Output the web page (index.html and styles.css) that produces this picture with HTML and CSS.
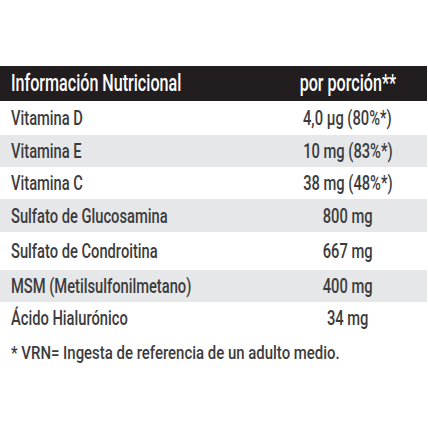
FILE: index.html
```html
<!DOCTYPE html>
<html lang="es">
<head>
    <meta charset="UTF-8">
    <meta name="viewport" content="width=device-width, initial-scale=1.0">
    <title>Información Nutricional</title>
    <link rel="stylesheet" href="styles.css">
</head>
<body>
    <!-- Tabla nutricional -->
    <table class="nutri-table">
        <thead>
            <tr class="row-head">
                <th class="col-name"><span class="txt">Información Nutricional</span></th>
                <th class="col-value"><span class="txt">por porción**</span></th>
            </tr>
        </thead>
        <tbody>
            <tr class="row-d">
                <td class="col-name"><span class="txt">Vitamina D</span></td>
                <td class="col-value"><span class="txt">4,0 µg (80%*)</span></td>
            </tr>
            <tr class="row-alt">
                <td class="col-name"><span class="txt">Vitamina E</span></td>
                <td class="col-value"><span class="txt">10 mg (83%*)</span></td>
            </tr>
            <tr>
                <td class="col-name"><span class="txt">Vitamina C</span></td>
                <td class="col-value"><span class="txt">38 mg (48%*)</span></td>
            </tr>
            <tr class="row-alt">
                <td class="col-name"><span class="txt">Sulfato de Glucosamina</span></td>
                <td class="col-value"><span class="txt">800 mg</span></td>
            </tr>
            <tr class="row-tall">
                <td class="col-name"><span class="txt">Sulfato de Condroitina</span></td>
                <td class="col-value"><span class="txt">667 mg</span></td>
            </tr>
            <tr class="row-alt">
                <td class="col-name"><span class="txt">MSM (Metilsulfonilmetano)</span></td>
                <td class="col-value"><span class="txt">400 mg</span></td>
            </tr>
            <tr>
                <td class="col-name"><span class="txt">Ácido Hialurónico</span></td>
                <td class="col-value"><span class="txt">34 mg</span></td>
            </tr>
        </tbody>
    </table>

    <p class="footnote"><span class="txt">* VRN= Ingesta de referencia de un adulto medio.</span></p>
</body>
</html>
```

FILE: styles.css
```css
:root {
    --head-bg: #221e1f;
    --alt-bg: #e6e7e8;
    --text-color: #3c3c3e;
}

body {
    font-family: Roboto, 'Liberation Sans', sans-serif;
    margin: 0;
    padding: 0;
    background-color: white;
    color: var(--text-color);
}

.nutri-table {
    width: 427px;
    margin-top: 66px;
    border-collapse: collapse;
    font-size: 21px;
    font-weight: 500;
}

.nutri-table th,
.nutri-table td {
    padding: 0;
    height: 32px;
    white-space: nowrap;
    vertical-align: middle;
}

/* condensed look: the page uses a narrow face */
.txt {
    display: inline-block;
    transform: scaleX(0.7);
    transform-origin: left center;
    white-space: nowrap;
}

.col-name {
    text-align: left;
    padding-left: 11px !important;
}

.col-value {
    width: 160px;
    text-align: center;
}

.col-value .txt {
    transform-origin: center center;
}

.row-head {
    background-color: var(--head-bg);
    color: white;
}

.row-head th {
    height: 35px;
    font-size: 23px;
    font-weight: 500;
}

.row-d td {
    height: 34px;
}

.row-alt {
    background-color: var(--alt-bg);
}

.row-alt td {
    height: 32px;
}

.nutri-table tr:nth-child(4) td {
    height: 33px;
}

.row-tall td {
    height: 38px;
}

.footnote {
    margin: 8px 0 0 11px;
    font-size: 18px;
    font-weight: 500;
}

.footnote .txt {
    transform: scaleX(0.83);
}
```
